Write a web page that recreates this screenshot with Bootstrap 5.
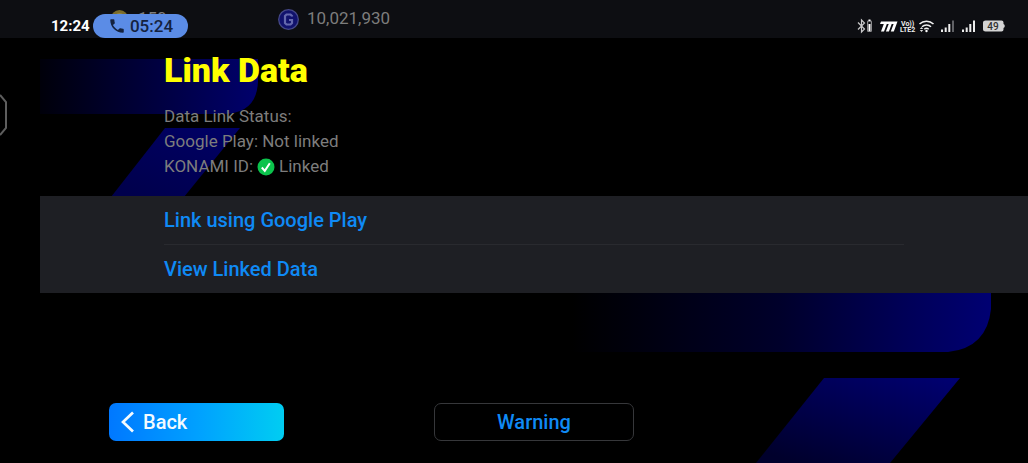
<!DOCTYPE html>
<html lang="en">
<head>
<meta charset="utf-8">
<meta name="viewport" content="width=device-width, initial-scale=1">
<title>Link Data</title>
<link href="https://cdn.jsdelivr.net/npm/bootstrap@5.3.0/dist/css/bootstrap.min.css" rel="stylesheet">
<style>
  body { background: #000; color: #7d7d7d; font-family: Roboto, sans-serif; }
  .topbar { background: #0d0e12; height: 38px; padding-left: 109px; font-size: 17px; line-height: 20px; padding-top: 8px; }
  .topbar .gold { width: 169px; }
  .statusbar { padding: 14px 23px 0 51px; height: 38px; }
  .clock { font-size: 15px; font-weight: 700; color: #fff; width: 42px; line-height: 24px; }
  .call-pill { background: #5b8ce6; color: #14223f; width: 95px; height: 24px; font-size: 17px; font-weight: 500; line-height: 24px; }
  .stage { margin-left: 40px; }
  .art-left { left: 0; top: 21px; z-index: -1; }
  .art-right { right: 37px; top: 255px; z-index: -1; }
  .handle { left: 0; top: 93px; }
  .inset { padding-left: 124px; padding-right: 124px; }
  .page-title { color: #ff0; font-size: 34px; line-height: 40px; font-weight: 900; padding-top: 12px; margin-bottom: 14px; }
  .status-lines { font-size: 17px; line-height: 25px; margin-bottom: 17px; }
  .panel { background: #1e1f24; }
  .panel a { color: #0f8af5; font-size: 20px; font-weight: 500; line-height: 48px; }
  .panel li + li { border-top: 1px solid #292a2f; }
  .actions { display: grid; grid-template-columns: 1fr 200px 1fr; padding: 0 69px; margin-top: 110px; }
  .actions .btn { height: 38px; border-radius: 7px; font-size: 20px; font-weight: 500; line-height: 24px; }
  .back { width: 175px; color: #f4fbff; background: linear-gradient(90deg, #0078ff, #00a0ff 50%, #00cdf2); border: 0; }
  .warning { color: #0f8af5; border: 1px solid #36373a; }
</style>
</head>
<body class="position-relative min-vh-100">
<header class="position-relative">
  <div class="topbar d-flex">
    <div class="gold d-flex gap-2">
      <svg width="21" height="21" viewBox="0 0 21 21" aria-hidden="true"><circle cx="10.500" cy="11" r="9" fill="#7a6c2b"/><circle cx="10.500" cy="11" r="6" fill="#968641"/></svg>
      <span>150</span>
    </div>
    <div class="d-flex gap-2">
      <svg width="21" height="23" viewBox="0 0 21 23" aria-hidden="true"><circle cx="10.500" cy="11.500" r="9.800" fill="#11126d" stroke="#454887" stroke-width="1.300"/><path d="M14 8.500V8L12.500 6.500h-4L7 8v7l1.500 1.500h4L14 15v-3h-3" fill="none" stroke="#6468ad" stroke-width="2.200"/></svg>
      <span>10,021,930</span>
    </div>
  </div>
  <div class="statusbar position-absolute top-0 start-0 w-100 d-flex">
    <span class="clock">12:24</span>
    <span class="call-pill rounded-pill d-flex align-items-center justify-content-center gap-1">
      <svg width="18" height="18" viewBox="0 0 24 24" aria-hidden="true"><path fill="#14223f" d="M6.600 10.800c1.400 2.800 3.800 5.100 6.600 6.600l2.200-2.200c.3-.3.700-.4 1-.2 1.200.4 2.400.6 3.600.6.600 0 1 .4 1 1V20c0 .6-.4 1-1 1C10.600 21 3 13.400 3 4c0-.6.400-1 1-1h3.500c.6 0 1 .4 1 1 0 1.300.2 2.500.6 3.600.1.400 0 .7-.2 1z"/></svg>
      05:24
    </span>
    <svg class="ms-auto" width="148" height="24" viewBox="857 14 148 24" role="img" aria-label="Bluetooth, signal and battery 49 percent">
      <g fill="none" stroke="#c9c9ca" stroke-width="1.200">
        <path d="M858 22.500l6.500 6.500-3 3V20l3 3-6.500 6.500"/>
        <rect x="867.600" y="21.100" width="3.800" height="10.400" rx=".8" stroke="#8c8c8e"/>
      </g>
      <path d="M868.500 24h2v7h-2zM868.500 19.500h2v1.500h-2z" fill="#fff"/>
      <path d="M881 21.500H897.500l-3.700 10h-3l2.800-7.500h-1.900l-2.800 7.500h-3l2.800-7.500h-1.900l-2.800 7.500h-3l2.800-7.500H880z" fill="#fff"/>
      <g font-family="Roboto, sans-serif" font-weight="700" fill="#eee"><text x="901" y="25.500" font-size="7">Vo))</text><text x="900" y="32" font-size="7">LTE2</text></g>
      <g fill="none" stroke="#f2f2f2" stroke-width="1.500">
        <path d="M919.500 24a10 10 0 0 1 14 0M922 26.800a6.500 6.500 0 0 1 9 0M924.300 29.300a3.300 3.300 0 0 1 4.400 0"/>
      </g>
      <circle cx="926.500" cy="31" r="1.200" fill="#fff"/><path d="M919.800 29l1.700-2 1.700 2zM919.800 30l1.700 2 1.700-2z" fill="#ddd"/>
      <path d="M941 29.500h2V32h-2zM944.700 27.500h2V32h-2zM948.300 24h2V32h-2z" fill="#eee"/><path d="M952 20.500h2V32h-2z" fill="#606165"/>
      <path d="M962 29.500h2V32h-2zM965.700 27.500h2V32h-2zM969.300 24h2V32h-2zM973 20.500h2V32h-2z" fill="#eee"/>
      <path d="M985.500 20.500h16q2 0 2 2v1.500q1.300.3 1.300 2t-1.300 2v1.500q0 2-2 2h-16q-2.500 0-2.500-2v-7q0-2 2.500-2z" fill="#d4d4d4"/>
      <text x="993" y="30" font-size="10" font-weight="500" text-anchor="middle" fill="#303030" font-family="Roboto, sans-serif">49</text>
    </svg>
  </div>
</header>

<svg class="handle position-absolute" width="9" height="44" viewBox="0 0 9 44" aria-hidden="true"><path d="M0 2l6 7v26l-6 7" fill="none" stroke="#5e5e5e" stroke-width="2"/></svg>

<main class="stage position-relative">
  <svg class="art-left position-absolute" width="220" height="140" viewBox="40 59 220 140" aria-hidden="true">
    <defs>
      <linearGradient id="barL"><stop offset="0" stop-color="#00000a"/><stop offset=".5" stop-color="#00003c"/><stop offset="1" stop-color="#00006c"/></linearGradient>
      <linearGradient id="legL" x1="1" y1="0" x2=".2" y2="1"><stop offset="0" stop-color="#000066"/><stop offset="1" stop-color="#00004c"/></linearGradient>
    </defs>
    <path d="M40 59H258V81Q257 114 222 114H40z" fill="url(#barL)"/>
    <path d="M165 128H240L184 197H111z" fill="url(#legL)"/>
  </svg>
  <svg class="art-right position-absolute" width="420" height="170" viewBox="571 293 420 170" aria-hidden="true">
    <defs>
      <linearGradient id="barR"><stop offset="0" stop-color="#000"/><stop offset=".5" stop-color="#00002b"/><stop offset=".8" stop-color="#000058"/><stop offset="1" stop-color="#000072"/></linearGradient>
      <linearGradient id="legR" x1="1" y1="0" x2=".2" y2="1"><stop offset="0" stop-color="#000072"/><stop offset="1" stop-color="#00002c"/></linearGradient>
    </defs>
    <path d="M571 293H991V309Q987 348 948 352H571z" fill="url(#barR)"/>
    <path d="M824 378H960L890 463H756z" fill="url(#legR)"/>
  </svg>

  <section class="inset">
    <h1 class="page-title">Link Data</h1>
    <div class="status-lines">
      <div>Data Link Status:</div>
      <div>Google Play: Not linked</div>
      <div class="d-flex align-items-center">KONAMI ID:
        <svg class="mx-1" width="18" height="18" viewBox="0 0 18 18" aria-hidden="true"><circle cx="9" cy="9" r="8.500" fill="#0bc34c"/><path d="M4.800 9.500l3 3.300 5-7.500" fill="none" stroke="#fff" stroke-width="2"/></svg>
        Linked</div>
    </div>
  </section>
  <nav class="panel inset" aria-label="Data link options">
    <ul class="list-unstyled mb-0">
      <li><a class="d-block text-decoration-none" href="#google-play">Link using Google Play</a></li>
      <li><a class="d-block text-decoration-none" href="#linked-data">View Linked Data</a></li>
    </ul>
  </nav>
  <div class="actions">
    <button type="button" class="btn back d-flex align-items-center gap-2">
      <svg width="14" height="22" viewBox="0 0 14 22" aria-hidden="true"><path d="M12 1.500L2 11l10 9.500" fill="none" stroke="#f4fbff" stroke-width="2.700"/></svg>
      Back
    </button>
    <button type="button" class="btn warning">Warning</button>
  </div>
</main>
<script src="https://cdn.jsdelivr.net/npm/bootstrap@5.3.0/dist/js/bootstrap.bundle.min.js"></script>
</body>
</html>
